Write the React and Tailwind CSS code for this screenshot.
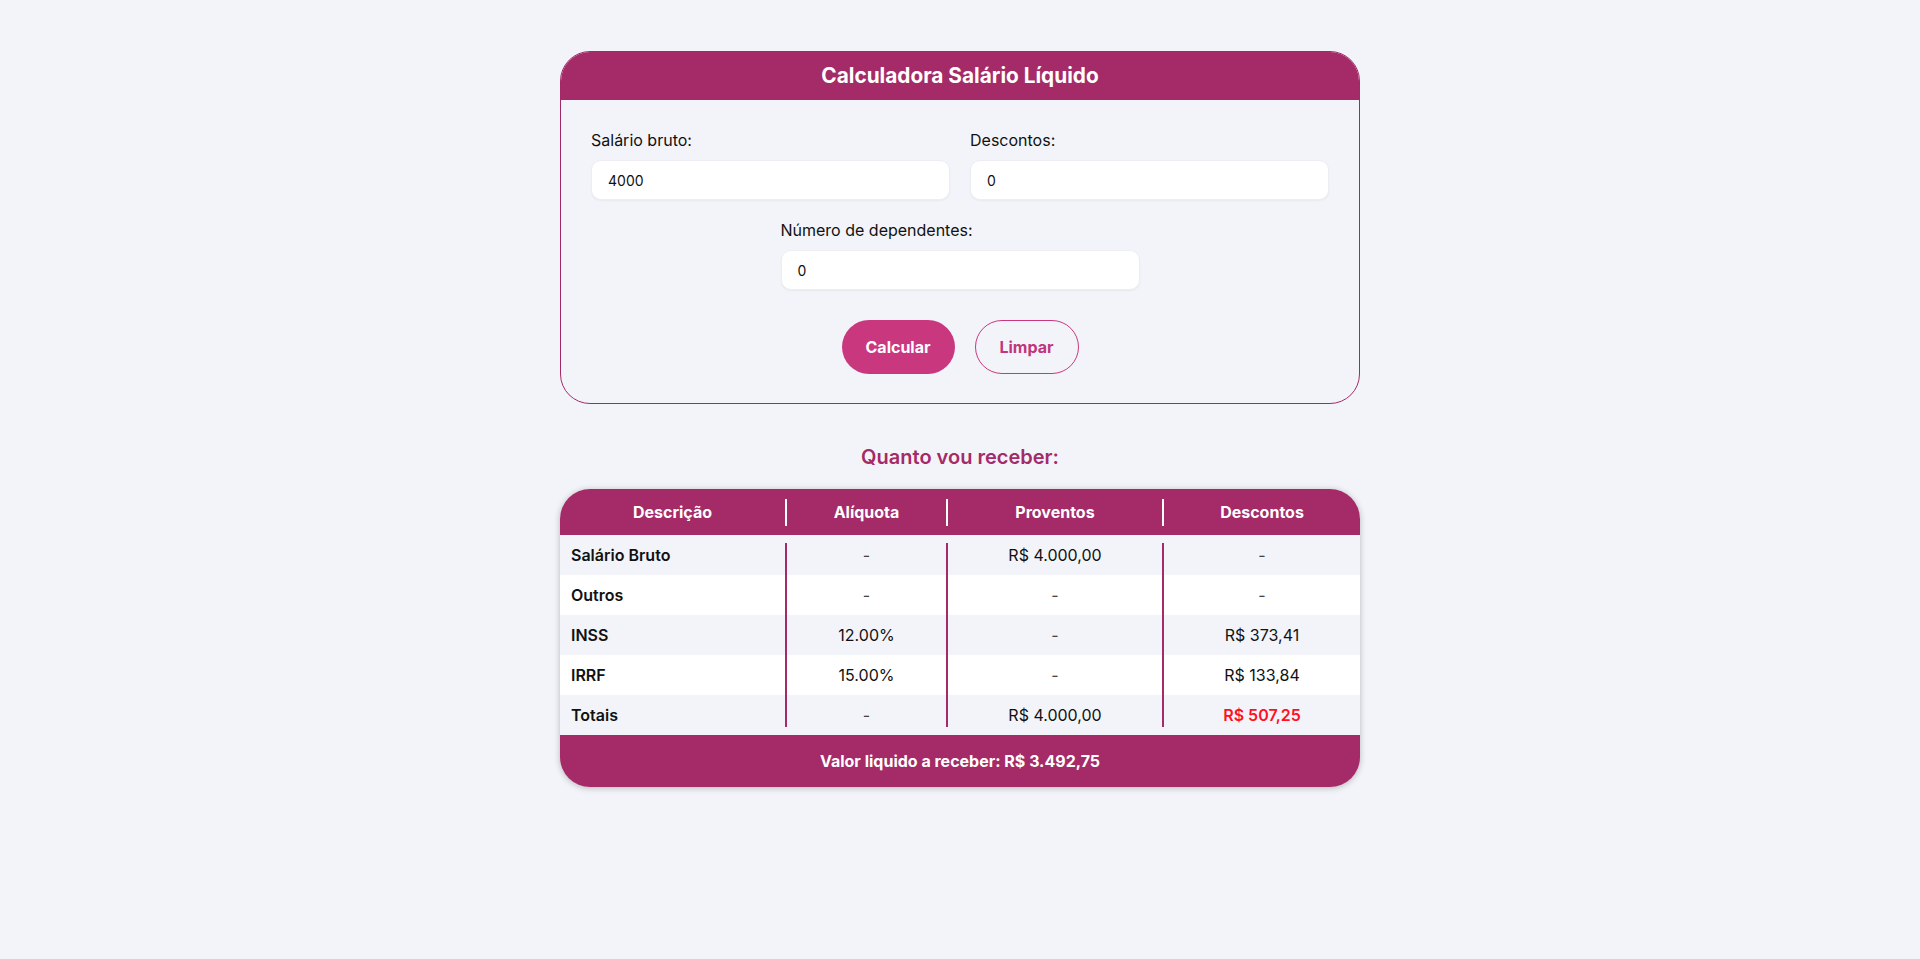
import React from "react";

const rows = [
  { d: "Salário Bruto", a: "-", p: "R$ 4.000,00", c: "-" },
  { d: "Outros", a: "-", p: "-", c: "-" },
  { d: "INSS", a: "12.00%", p: "-", c: "R$ 373,41" },
  { d: "IRRF", a: "15.00%", p: "-", c: "R$ 133,84" },
  { d: "Totais", a: "-", p: "R$ 4.000,00", c: "R$ 507,25", total: true },
];

function Field({ label, value }) {
  return (
    <div className="flex flex-col">
      <label className="text-[16px] leading-6 text-[#111] mb-2">{label}</label>
      <input
        readOnly
        value={value}
        className="h-10 w-full rounded-[10px] bg-white border border-[#eceef4] shadow-[0_1px_2px_rgba(0,0,0,0.05)] px-4 text-[14px] text-[#111] outline-none"
      />
    </div>
  );
}

function Cell({ children, className = "" }) {
  return <div className={"flex items-center justify-center text-[16px] " + className}>{children}</div>;
}

export default function App() {
  return (
    <div
      className="min-h-screen w-full bg-[#f3f4f9] flex flex-col items-center pt-[51px]"
      style={{ fontFamily: "Inter, 'Noto Sans', sans-serif" }}
    >
      <div className="w-[800px] rounded-[30px] border border-[#a32a67] overflow-hidden">
        <div className="h-12 bg-[#a42b67] flex items-center justify-center">
          <h1 className="text-white text-[20.8px] font-bold">Calculadora Salário Líquido</h1>
        </div>
        <div className="px-[30px] pt-[28px] pb-[29px] flex flex-col">
          <div className="grid grid-cols-2 gap-5">
            <Field label="Salário bruto:" value="4000" />
            <Field label="Descontos:" value="0" />
          </div>
          <div className="mt-[18px] flex justify-center">
            <div className="w-[359px]">
              <Field label="Número de dependentes:" value="0" />
            </div>
          </div>
          <div className="mt-[30px] flex justify-center gap-5">
            <button className="h-[54px] w-[113px] rounded-full bg-[#c9387f] text-white font-bold text-[16px]">
              Calcular
            </button>
            <button className="h-[54px] w-[104px] rounded-full border border-[#c9387f] text-[#c2357b] font-bold text-[16px]">
              Limpar
            </button>
          </div>
        </div>
      </div>

      <h2 className="mt-[39px] text-[20px] leading-7 font-semibold text-[#a52a68]">Quanto vou receber:</h2>

      <div className="mt-[18px] w-[800px] rounded-[30px] overflow-hidden shadow-[0_1px_6px_rgba(0,0,0,0.25)]">
        <div className="h-[46px] bg-[#a42b67] grid grid-cols-[225px_2px_159px_2px_214px_2px_196px] items-center text-white font-bold">
          <Cell>Descrição</Cell>
          <div className="h-[27px] bg-white" />
          <Cell>Alíquota</Cell>
          <div className="h-[27px] bg-white" />
          <Cell>Proventos</Cell>
          <div className="h-[27px] bg-white" />
          <Cell>Descontos</Cell>
        </div>
        {rows.map((r, i) => {
          const first = i === 0;
          const last = i === rows.length - 1;
          const sep = "bg-[#a42b67] " + (first ? "mt-2" : "") + (last ? "mb-2" : "");
          return (
            <div
              key={r.d}
              className={
                "h-10 grid grid-cols-[225px_2px_159px_2px_214px_2px_196px] " +
                (i % 2 === 0 ? "bg-[#f3f4f9]" : "bg-white")
              }
            >
              <div className="flex items-center pl-[11px] text-[16px] font-semibold text-[#111]">{r.d}</div>
              <div className={sep} />
              <Cell className={r.a === "-" ? "text-[#444]" : "text-[#111]"}>{r.a}</Cell>
              <div className={sep} />
              <Cell className={r.p === "-" ? "text-[#444]" : "text-[#111]"}>{r.p}</Cell>
              <div className={sep} />
              <Cell
                className={
                  r.total ? "text-[#ff1024] font-semibold" : r.c === "-" ? "text-[#444]" : "text-[#111]"
                }
              >
                {r.c}
              </Cell>
            </div>
          );
        })}
        <div className="h-[52px] bg-[#a42b67] flex items-center justify-center text-white font-bold text-[16px]">
          Valor liquido a receber: R$ 3.492,75
        </div>
      </div>
    </div>
  );
}
